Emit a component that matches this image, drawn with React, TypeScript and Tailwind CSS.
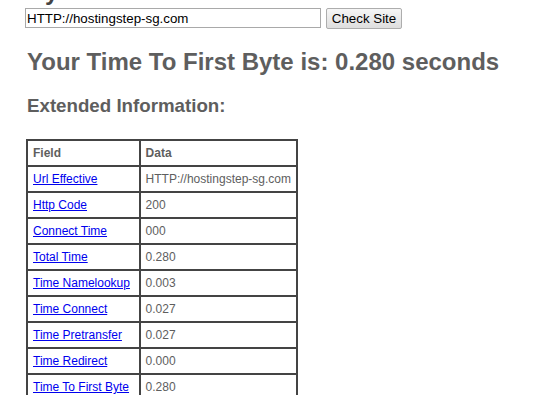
const rows: { field: string; value: string }[] = [
  { field: 'Url Effective', value: 'HTTP://hostingstep-sg.com' },
  { field: 'Http Code', value: '200' },
  { field: 'Connect Time', value: '000' },
  { field: 'Total Time', value: '0.280' },
  { field: 'Time Namelookup', value: '0.003' },
  { field: 'Time Connect', value: '0.027' },
  { field: 'Time Pretransfer', value: '0.027' },
  { field: 'Time Redirect', value: '0.000' },
  { field: 'Time To First Byte', value: '0.280' },
  { field: 'Size Download', value: '0' },
]

export default function App() {
  return (
    <div className="h-[395px] overflow-hidden bg-white pl-[25px] font-['Liberation_Sans',Arial,sans-serif] text-[#5e5e5e]">
      <h1 className="-mt-[22px] h-[26px] text-[24px] font-bold leading-[28px] text-[#444]">My TTFB</h1>

      <form className="mt-[4px] flex items-start gap-[5px]" onSubmit={(e) => e.preventDefault()}>
        <input
          defaultValue="HTTP://hostingstep-sg.com"
          className="h-[20px] w-[296px] border border-[#a9a9a9] px-[1px] text-[13.33px] leading-[16px] text-black outline-none"
        />
        <button
          type="submit"
          className="h-[21px] w-[76px] rounded-[2px] border border-[#adadad] bg-gradient-to-b from-[#f6f6f6] to-[#dedede] text-[13.33px] leading-[16px] text-black"
        >
          Check Site
        </button>
      </form>

      <h2 className="mt-[19px] pl-[2px] text-[24px] font-bold leading-[28px]">
        Your Time To First Byte is: 0.280 seconds
      </h2>

      <h3 className="mt-[19px] pl-[2px] text-[18.72px] font-bold leading-[22px]">Extended Information:</h3>

      <table className="mt-[22px] ml-[1px] w-[272px] border-collapse border-2 border-[#444] text-[12px] leading-[14px]">
        <thead>
          <tr>
            <th className="h-[26px] w-[113px] border-2 border-[#444] px-[5px] text-left font-bold">Field</th>
            <th className="h-[26px] border-2 border-[#444] px-[5px] text-left font-bold">Data</th>
          </tr>
        </thead>
        <tbody>
          {rows.map((r) => (
            <tr key={r.field}>
              <td className="h-[26px] border-2 border-[#444] px-[5px] whitespace-nowrap">
                <a href="#" className="text-[#0000ee] underline">{r.field}</a>
              </td>
              <td className="h-[26px] border-2 border-[#444] px-[5px] whitespace-nowrap">{r.value}</td>
            </tr>
          ))}
        </tbody>
      </table>
    </div>
  )
}
